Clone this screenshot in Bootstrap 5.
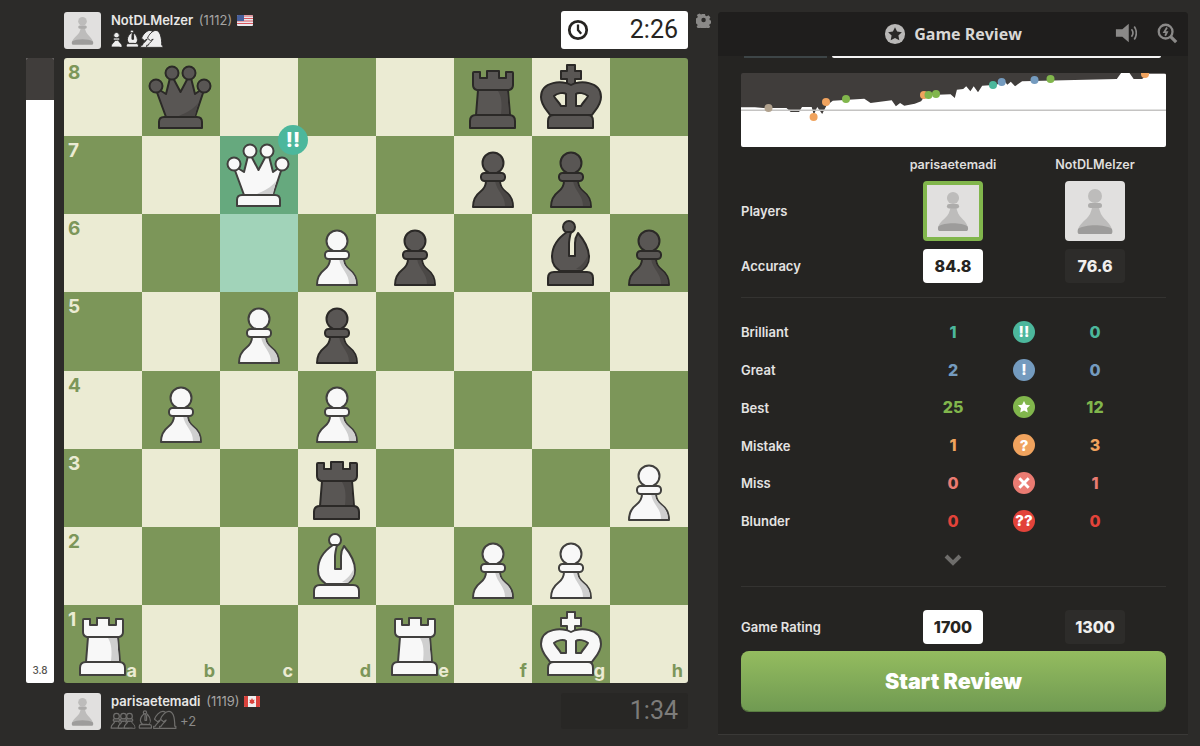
<!DOCTYPE html>
<html lang="en">

<head>
    <meta charset="UTF-8" />
    <title>Game Review</title>
    <link rel="stylesheet" href="https://cdn.jsdelivr.net/npm/bootstrap@5.3.0/dist/css/bootstrap.min.css">
    <style>
        body { background: #2c2b29; height: 746px; overflow: hidden; font-family: "Inter", "Liberation Sans", sans-serif; color: #e4e3e2; }
        .left-col { width: 662px; margin-left: 26px; }
        .player-top { height: 58px; padding: 12px 0 0 38px; }
        .player-bot { height: 63px; padding: 10px 0 0 38px; }
        .avatar { width: 37px; height: 37px; background: #e1e0df; border-radius: 3px; flex: none; }
        .avatar svg { width: 100%; height: 100%; display: block; }
        .pl-info { margin-left: 10px; font-size: 13px; line-height: 16px; }
        .pl-name { font-weight: 600; color: #e8e7e6; }
        .pl-rating { color: #a5a4a2; margin-left: 2px; }
        .flag { width: 16px; height: 11px; margin-left: 1px; vertical-align: -1px; border-radius: 1px; }
        .caps { height: 17px; margin-top: 3px; color: #8b8a88; font-size: 13px; }
        .caps svg { width: 21px; height: 21px; margin-top: -3px; flex: none; }
        .caps .cp-step { margin-left: -5px; }
        .caps .cp-over { margin-left: -15px; }
        .caps .cp-pawn { margin-left: -14.5px; }
        .caps-w { --f: #eeeeee; --s: #2c2b29; --h: #eeeeee; --w: 3.500; }
        .caps-d { --f: #2c2b29; --s: #6f6e6c; --h: #2c2b29; --w: 4.500; }
        .caps-num { margin-left: 2px; }
        .clock-box { width: 127px; height: 38px; margin-top: -1px; border-radius: 3px; font-family: "Roboto", sans-serif; font-size: 25px; padding-right: 10px; }
        .clock-on { background: #fff; color: #262421; }
        .clock-off { background: #282725; color: #7d7c7a; height: 36px; margin-top: 0; }
        .clock-box svg { width: 22px; height: 22px; margin-left: 6px; }
        .eval-bar { width: 28px; height: 625px; background: #fff; border-radius: 2px; overflow: hidden; flex: none; }
        .eval-dark { height: 42px; background: #403d3b; }
        .eval-num { font-size: 10px; color: #55534f; font-weight: 500; padding-bottom: 5px; }
        .board-wrap { position: relative; margin-left: 10px; }
        .chess-board { width: 624px; height: 625px; display: grid; grid-template-columns: repeat(8, 78px); grid-template-rows: repeat(8, 1fr); border-radius: 3px; overflow: hidden; }
        .sq { position: relative; }
        .sq svg { width: 78px; height: 78px; display: block; }
        .sq-l { background: #ebebd3; color: #7c9659; }
        .sq-d { background: #7c9659; color: #ebebd3; }
        .sq-hl { background: #66a97e; }
        .sq-hl2 { background: #a1d3b9; }
        .co-rank { position: absolute; top: 4px; left: 4px; font-size: 19px; line-height: 22px; font-weight: 700; }
        .co-file { position: absolute; right: 5px; bottom: 1px; font-size: 18px; line-height: 22px; font-weight: 700; }
        .sq-badge { position: absolute; left: 214px; top: 67px; width: 30px; height: 30px; font-size: 20px; }
        .tag-ic { border-radius: 50%; color: #fff; font-weight: 800; line-height: 1; }
        .gear-col { width: 30px; padding-top: 13px; }
        .gear-col svg { width: 15px; height: 15px; display: block; margin: 0 auto; }
        .rv-panel { width: 470px; height: 723px; margin-top: 12px; background: #252422; border-radius: 4px 4px 0 0; border-bottom: 1px solid #3a3937; }
        .rv-head { height: 44px; background: #1f1e1d; border-radius: 4px 4px 0 0; position: relative; font-size: 16px; font-weight: 700; color: #d9d8d6; font-family: "Open Sans", sans-serif; }
        .rv-head .star-ic { width: 22px; height: 22px; margin-right: 8px; }
        .rv-tools { position: absolute; right: 10px; top: 10px; gap: 19px; }
        .rv-tools svg { width: 22px; height: 22px; display: block; }
        .rv-tabs { height: 2px; margin: 0 27px 0 26px; gap: 5px; }
        .tab-off { width: 83px; background: #3d4547; }
        .tab-on { flex: 1; background: #f4f4f4; border-radius: 0 0 2px 2px; }
        .rv-body { padding: 15px 22px 0 23px; }
        .rv-graph { width: 425px; height: 74px; display: block; border-radius: 2px; }
        .rv-grid { display: grid; grid-template-columns: 182px 60px 82px 60px 41px; align-items: center; font-size: 13px; font-weight: 600; }
        .rv-grid > .cen { text-align: center; justify-self: center; }
        .rv-grid > .lab { padding-top: 2px; }
        .rv-names { margin-top: 10px; line-height: 16px; font-size: 12.600px; color: #dfdedd; }
        .rv-ava { margin-top: 8px; }
        .ava-big { width: 60px; height: 60px; background: #e1e0df; border-radius: 4px; }
        .ava-big svg { width: 100%; height: 100%; display: block; }
        .ava-win { border: 4px solid #81b64c; }
        .rv-acc { margin-top: 8px; }
        .tile { width: 60px; height: 34px; border-radius: 4px; font-size: 16px; font-weight: 800; line-height: 34px; text-align: center; }
        .tile-w { background: #fff; color: #262421; }
        .tile-d { background: #2d2c2a; color: #f0efee; }
        .rv-line { height: 1px; background: #343331; }
        .rv-line-top { margin: 14px 0 15px; }
        .rv-rating { margin-top: 23px; }
        .stat-row { height: 37.8px; }
        .stat-num { font-size: 16px; font-weight: 800; }
        .stat-ic { width: 22px; height: 22px; font-size: 15px; }
        .stat-ic svg { width: 14px; height: 14px; }
        .chev-row { height: 40px; margin-bottom: 6px; }
        .chev-row svg { width: 18px; height: 12px; margin-left: 0; }
        .start-btn { width: 425px; height: 60px; margin-top: 7px; border: 0; border-radius: 8px; background: linear-gradient(#94bc5f, #709a52); box-shadow: 0 1px 0 #5a7d42; color: #fff; font-size: 21.500px; font-weight: 900; }
        .start-btn:hover { color: #fff; }
        .pf { fill: var(--f); stroke: var(--s); stroke-width: var(--w, 2); stroke-linejoin: round; }
        .ps { fill: var(--h); stroke: none; }
        .pc-w { --f: #f8f8f8; --s: #41403e; --h: #cfcfcf; }
        .pc-b { --f: #595654; --s: #2b2927; --h: #4b4846; }
    </style>
</head>

<body>
    <svg width="0" height="0" class="position-absolute">
        <symbol id="p" viewBox="0 0 78 78">
            <path class="pf" d="M19 71c0-7 3-12 7-15 4-3 6-7 6-11h14c0 4 2 8 6 11 4 3 7 8 7 15z" />
            <path class="ps" d="M41 45h4c0 5 3 8 6 11 4 3 7 7 7 14h-7c0-11-8-14-10-25z" />
            <circle class="pf" cx="39" cy="27" r="10.500" />
            <rect class="pf" x="27" y="37" width="24" height="8" rx="3.500" />
        </symbol>
        <symbol id="q" viewBox="0 0 78 78">
            <path class="pf" d="M24 59L13 29l11 7 5-20 9.500 18 9.500-18 5 20 10-7-10 30z" />
            <path class="ps" d="M37 58c6-3 14-6 19-13l-3 13z" />
            <circle class="pf" cx="14" cy="28" r="6.500" />
            <circle class="pf" cx="30" cy="15" r="6.500" />
            <circle class="pf" cx="47" cy="15" r="6.500" />
            <circle class="pf" cx="62" cy="28" r="6.500" />
            <path class="pf" d="M17 70v-6q0-5 5-5h33q5 0 5 5v6z" />
        </symbol>
        <symbol id="r" viewBox="0 0 78 78">
            <path class="pf" d="M24 32h30l2 25H22z" />
            <path class="ps" d="M44 33h9l2 23h-8c1-8 1-17-3-23z" />
            <path class="pf" d="M19 15q0-1 1-1h6v6h7v-7h12v7h7v-6h6q1 0 1 1v12q0 4-4 5H23q-4-1-4-5z" />
            <path class="pf" d="M16 70v-7q0-6 6-6h33q6 0 6 6v7z" />
        </symbol>
        <symbol id="k" viewBox="0 0 78 78">
            <path class="pf" d="M35 7h8v6h6v8h-6v7h-8v-7h-6v-8h6z" />
            <path class="pf" fill-rule="evenodd" d="M39 27c8-5 30-4 30 12 0 8-5 12-9 18H18c-4-6-9-10-9-18 0-16 22-17 30-12zM22 38c3-3 10-4 12-2v12h-5c-2-4-6-7-7-10zM56 38c-3-3-10-4-12-2v12h5c2-4 6-7 7-10z" />
            <path class="pf" d="M16 70v-7q0-6 6-6h34q5 0 5 6v7z" />
        </symbol>
        <symbol id="b" viewBox="0 0 78 78">
            <circle class="pf" cx="37" cy="13" r="6" />
            <path class="pf" d="M35 18C26 24 20 33 20 43c0 8 4 11 8 14h21c4-3 8-6 8-14 0-9-5-17-11-24-2 3-3 6-3 10v13h-6V30c0-4 1-8 2-12z" />
            <path class="ps" d="M50 56c4-4 7-8 6-15-3 7-7 11-12 14z" />
            <path class="pf" d="M16 71v-7q0-6 6-6h33q6 0 6 6v7z" />
        </symbol>
        <symbol id="n" viewBox="0 0 78 78">
            <path class="pf" d="M10 72v-8h6c2-9 14-14 18-23l-10 6-11-9C18 24 32 9 44 9c16 0 22 26 22 55h4v8z" />
        </symbol>
        <symbol id="av" viewBox="0 0 60 60">
            <path d="M13 50c0-7 8-10 12-17 1-3 2-5 2-7h7c0 2 1 4 2 7 4 7 11 10 11 17 0 3-34 3-34 0z" fill="#bdbcbb" />
            <path d="M13 48c7-5 27-5 34 0 1 3 0 5-1 5H14c-1 0-2-2-1-5z" fill="#9d9c9b" />
            <circle cx="30" cy="15" r="7" fill="#bdbcbb" />
            <rect x="23" y="22" width="14" height="5" rx="2.500" fill="#adacab" />
        </symbol>
    </svg>

    <div class="d-flex">
        <div class="left-col">
            <div class="player-top d-flex">
                <div class="avatar"><svg><use href="#av" /></svg></div>
                <div class="pl-info flex-grow-1">
                    <div><span class="pl-name">NotDLMelzer</span> <span class="pl-rating">(1112)</span>
                        <svg class="flag" viewBox="0 0 16 11"><rect width="16" height="11" fill="#e9e9ee" /><path d="M0 1h16M0 3.500h16M0 6h16M0 8.500h16" stroke="#d8545c" stroke-width="1.200" /><rect width="7" height="6" fill="#48609c" /></svg>
                    </div>
                    <div class="caps caps-w d-flex">
                        <svg class="cp-step"><use href="#p" /></svg><svg class="cp-step"><use href="#b" /></svg><svg class="cp-step"><use href="#n" /></svg><svg class="cp-over"><use href="#n" /></svg>
                    </div>
                </div>
                <div class="clock-box clock-on d-flex align-items-center justify-content-between">
                    <svg viewBox="0 0 24 24" fill="none" stroke="#262421"><circle cx="12" cy="12" r="9.500" stroke-width="3" /><path d="M12 6v6l3.500 4" stroke-width="2.500" /></svg>
                    <span>2:26</span>
                </div>
            </div>
            <div class="d-flex">
                <div class="eval-bar d-flex flex-column">
                    <div class="eval-dark"></div>
                    <div class="eval-num mt-auto text-center">3.8</div>
                </div>
                <div class="board-wrap">
                    <div class="chess-board" id="board"></div>
                    <div class="sq-badge tag-ic d-flex align-items-center justify-content-center" style="background:#4cb79c">!!</div>
                </div>
            </div>
            <div class="player-bot d-flex">
                <div class="avatar"><svg><use href="#av" /></svg></div>
                <div class="pl-info flex-grow-1">
                    <div><span class="pl-name">parisaetemadi</span> <span class="pl-rating">(1119)</span>
                        <svg class="flag" viewBox="0 0 16 11"><rect width="16" height="11" fill="#f0eeee" /><rect width="4" height="11" fill="#d8423c" /><rect x="12" width="4" height="11" fill="#d8423c" /><path d="M8 2l1 2 1.500-.5-.5 2.500 1 .5-3 1.500-3-1.500 1-.5-.5-2.500L7 4z" fill="#d8423c" /></svg>
                    </div>
                    <div class="caps caps-d d-flex align-items-center">
                        <svg class="cp-step"><use href="#p" /></svg><svg class="cp-pawn"><use href="#p" /></svg><svg class="cp-pawn"><use href="#p" /></svg><svg class="cp-step"><use href="#b" /></svg><svg class="cp-step"><use href="#n" /></svg><svg class="cp-over"><use href="#n" /></svg><span class="caps-num">+2</span>
                    </div>
                </div>
                <div class="clock-box clock-off d-flex align-items-center justify-content-end"><span>1:34</span></div>
            </div>
        </div>

        <div class="gear-col">
            <svg viewBox="0 0 24 24"><path fill="#8a8987" fill-rule="evenodd" d="M9.500 1h5l.8 3.300 2.400 1 2.900-1.800 3.500 3.500-1.800 2.900 1 2.400 3 .7v5l-3.300.8-1 2.400 1.800 2.900-3.500 3.500-2.900-1.800-2.400 1-.8 3.300h-5l-.8-3.300-2.400-1-2.900 1.800-3.500-3.500 1.800-2.900-1-2.400-3-.8V9l3.300-.8 1-2.400-1.800-2.900L4.600.4l2.900 1.800 2-.8zM12 8a4 4 0 1 0 0 8 4 4 0 0 0 0-8z" transform="translate(1.300 .5) scale(.9)" /></svg>
        </div>

        <div class="rv-panel">
            <div class="rv-head d-flex align-items-center justify-content-center">
                <svg class="star-ic" viewBox="0 0 24 24"><circle cx="12" cy="12" r="11" fill="#b9b8b7" /><polygon points="12,4.500 14.300,9.400 19.500,10 15.700,13.600 16.700,18.900 12,16.300 7.300,18.900 8.300,13.600 4.500,10 9.700,9.400" fill="#2a2928" /></svg>
                <span>Game Review</span>
                <div class="rv-tools d-flex">
                    <svg viewBox="0 0 24 24" fill="none"><path d="M1 8h7l7-6v20l-7-6H1z" fill="#8a8988" /><path d="M18 8c2 2.500 2 5.500 0 8M21 5c3 4 3 10 0 14" stroke="#8a8988" stroke-width="1.800" /></svg>
                    <svg viewBox="0 0 24 24" fill="none" stroke="#8a8988"><circle cx="10.500" cy="10.500" r="7.500" stroke-width="2.500" /><path d="M16 16l6 6" stroke-width="3.500" /><path d="M12 6l-3 5h3l-2 4" stroke-width="2" /></svg>
                </div>
            </div>
            <div class="rv-tabs d-flex"><div class="tab-off"></div><div class="tab-on"></div></div>
            <div class="rv-body">
                <svg class="rv-graph" id="graph" viewBox="0 0 425 74"></svg>

                <div class="rv-grid rv-names"><div></div><div class="cen text-nowrap">parisaetemadi</div><div></div><div class="cen text-nowrap">NotDLMelzer</div></div>
                <div class="rv-grid rv-ava"><div class="lab">Players</div><div class="ava-big ava-win"><svg><use href="#av" /></svg></div><div></div><div class="ava-big"><svg><use href="#av" /></svg></div></div>
                <div class="rv-grid rv-acc"><div class="lab">Accuracy</div><div class="tile tile-w">84.8</div><div></div><div class="tile tile-d">76.6</div></div>
                <div class="rv-line rv-line-top"></div>

                <div id="stats"></div>

                <div class="rv-grid chev-row"><div></div><div class="cen"><svg viewBox="0 0 18 12" fill="none" stroke="#6e6d6b" stroke-width="4"><path d="M2 2l7 7 7-7" /></svg></div></div>
                <div class="rv-line"></div>

                <div class="rv-grid rv-rating"><div class="lab">Game Rating</div><div class="tile tile-w">1700</div><div></div><div class="tile tile-d">1300</div></div>
                <button class="btn start-btn" type="button">Start Review</button>
            </div>
        </div>
    </div>

    <script>
        const layout = [
            ".q...rk.",
            "..Q..pp.",
            "...Pp.bp",
            "..Pp....",
            ".P.P....",
            "...r...P",
            "...B.PP.",
            "R...R.K.",
        ];
        const board = document.getElementById("board");
        const files = "abcdefgh";

        layout.forEach((line, r) => {
            line.split("").forEach((ch, c) => {
                const sq = document.createElement("div");
                let cls = (r + c) % 2 === 0 ? "sq-l" : "sq-d";
                sq.className = "sq " + cls;
                if (r === 1 && c === 2) sq.classList.add("sq-hl");
                if (r === 2 && c === 2) sq.classList.add("sq-hl2");
                let html = "";
                if (c === 0) html += `<span class="co-rank">${8 - r}</span>`;
                if (r === 7) html += `<span class="co-file">${files[c]}</span>`;
                if (ch !== ".") {
                    const white = ch === ch.toUpperCase();
                    html += `<svg class="${white ? "pc-w" : "pc-b"}"><use href="#${ch.toLowerCase()}" /></svg>`;
                }
                sq.innerHTML = html;
                board.appendChild(sq);
            });
        });

        // graph points were read off the reference at 2.376 x 3 scale
        const line = [[477,323],[510,323],[530,325],[585,325],[595,337],[615,337],[622,322],[645,322],[650,345],[658,322],[670,343],[680,318],[695,303],[770,297],[785,310],[835,302],[845,320],[855,310],[865,318],[890,312],[905,305],[915,287],[975,284],[985,295],[990,270],[1005,268],[1012,260],[1022,275],[1030,260],[1040,278],[1050,258],[1085,255],[1100,240],[1110,255],[1118,246],[1128,260],[1145,245],[1370,238],[1380,220],[1400,220],[1410,238],[1430,238],[1445,222],[1487,222]];
        const pts = line.map(([x, y]) => `${((x - 477) / 2.376).toFixed(1)},${((y - 220) / 3).toFixed(1)}`);
        const dots = [[27.500,35,"#b0a18d"],[72.600,44,"#f0a35e"],[85,29,"#f0a35e"],[105,26,"#81b64c"],[183,22,"#f0a35e"],[187.500,22,"#81b64c"],[195,21,"#81b64c"],[252,12,"#4cb79c"],[260.700,9,"#749bbf"],[293.500,7,"#749bbf"],[309.500,6,"#81b64c"],[404,1,"#f0a35e"]];
        document.getElementById("graph").innerHTML =
            `<rect width="425" height="74" fill="#403d3b" />` +
            `<polygon points="0,74 ${pts.join(" ")} 425,74" fill="#fff" />` +
            `<rect y="36.500" width="425" height="1.500" fill="#c4c3c2" />` +
            dots.map(([x, y, col]) => `<circle cx="${x}" cy="${y}" r="4" fill="${col}" />`).join("");

        const star = `<svg viewBox="0 0 24 24"><polygon points="12,1.500 15.200,8.300 22.500,9.200 17.100,14.300 18.500,21.600 12,18 5.500,21.600 6.900,14.300 1.500,9.200 8.800,8.300" fill="#fff" /></svg>`;
        const cross = `<svg viewBox="0 0 24 24" fill="none" stroke="#fff" stroke-width="5"><path d="M4 4l16 16M20 4L4 20" /></svg>`;
        const stats = [
            ["Brilliant", 1, 0, "#4cb79c", "!!"],
            ["Great", 2, 0, "#749bbf", "!"],
            ["Best", 25, 12, "#81b64c", star],
            ["Mistake", 1, 3, "#f0a35e", "?"],
            ["Miss", 0, 1, "#ea7b72", cross],
            ["Blunder", 0, 0, "#e2433a", "??"],
        ];
        document.getElementById("stats").innerHTML = stats.map(([name, a, b, col, ic]) => `
            <div class="rv-grid stat-row">
                <div class="lab">${name}</div>
                <div class="cen stat-num" style="color:${col}">${a}</div>
                <div class="cen stat-ic tag-ic d-flex align-items-center justify-content-center" style="background:${col}">${ic}</div>
                <div class="cen stat-num" style="color:${col}">${b}</div>
            </div>`).join("");
    </script>
    <script src="https://cdn.jsdelivr.net/npm/bootstrap@5.3.0/dist/js/bootstrap.bundle.min.js"></script>
</body>

</html>
